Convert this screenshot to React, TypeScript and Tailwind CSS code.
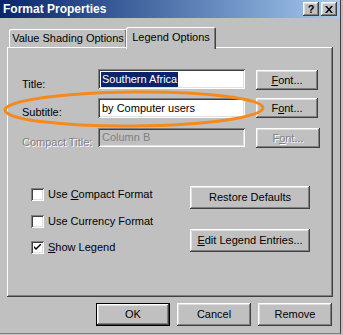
const raised =
  "bg-[#c0c0c0] shadow-[inset_-1px_-1px_0_#404040,inset_1px_1px_0_#ffffff,inset_-2px_-2px_0_#808080,inset_2px_2px_0_#dfdfdf]";
const sunken =
  "shadow-[inset_1px_1px_0_#808080,inset_-1px_-1px_0_#ffffff,inset_2px_2px_0_#404040,inset_-2px_-2px_0_#dfdfdf]";
const disabledText = "text-[#808080] [text-shadow:1px_1px_0_#ffffff]";

function Btn({ children, className = "", disabled = false }: { children: React.ReactNode; className?: string; disabled?: boolean }) {
  return (
    <div className={`${raised} flex items-center justify-center ${disabled ? disabledText : "text-black"} ${className}`}>
      {children}
    </div>
  );
}

function Field({ children, className = "", disabled = false }: { children?: React.ReactNode; className?: string; disabled?: boolean }) {
  return (
    <div className={`${sunken} ${disabled ? "bg-[#c0c0c0] text-[#808080]" : "bg-white text-black"} flex items-center px-[3px] ${className}`}>
      {children}
    </div>
  );
}

function Check({ checked, label }: { checked?: boolean; label: React.ReactNode }) {
  return (
    <div className="flex items-center h-[13px] gap-[4px]">
      <div className={`${sunken} bg-white w-[13px] h-[13px] flex items-center justify-center`}>
        {checked && (
          <svg width="7" height="7" viewBox="0 0 7 7">
            <path d="M0 2 L0 4 L2 6 L7 1 L7 -1 L2 4 Z" fill="#000" />
          </svg>
        )}
      </div>
      <span>{label}</span>
    </div>
  );
}

export default function App() {
  return (
    <div className="w-[343px] h-[335px] bg-[#c0c0c0] overflow-hidden text-[11px] leading-none font-['Liberation_Sans',Arial,sans-serif] text-black">
      <div className="relative w-[341px] h-[334px] border-r border-b border-r-[#404040] border-b-[#808080]">
        {/* title bar */}
        <div className="h-[18px] flex items-center justify-between bg-gradient-to-r from-[#0a246a] to-[#a6caf0] pl-[3px] pr-[3px]">
          <span className="text-white font-bold text-[12px]">Format Properties</span>
          <div className="flex gap-[2px]">
            <Btn className="w-[16px] h-[14px] font-bold text-[11px]">?</Btn>
            <Btn className="w-[16px] h-[14px]">
              <svg width="8" height="7" viewBox="0 0 8 7">
                <path d="M0 0 L2 0 L4 2.5 L6 0 L8 0 L5 3.5 L8 7 L6 7 L4 4.5 L2 7 L0 7 L3 3.5 Z" fill="#000" />
              </svg>
            </Btn>
          </div>
        </div>

        {/* tabs */}
        <div className="flex items-end pl-[9px] pt-[9px] h-[29px]">
          <div className="w-[118px] h-[18px] rounded-t-[2px] shadow-[inset_1px_1px_0_#ffffff,inset_-1px_0_0_#404040,inset_-2px_0_0_#808080] flex items-center justify-center pt-[1px]">
            Value Shading Options
          </div>
          <div className="relative z-10 -ml-[1px] w-[90px] h-[22px] -mb-[2px] bg-[#c0c0c0] rounded-t-[2px] shadow-[inset_1px_1px_0_#ffffff,inset_-1px_0_0_#404040,inset_-2px_0_0_#808080] flex items-start justify-center pt-[5px]">
            Legend Options
          </div>
        </div>

        {/* panel */}
        <div className="ml-[7px] w-[326px] h-[250px] shadow-[inset_-1px_-1px_0_#404040,inset_1px_1px_0_#ffffff,inset_-2px_-2px_0_#808080] pl-[15px] pt-[22px] flex flex-col">
          <div className="flex items-start h-[20px]">
            <span className="w-[76px] pt-[10px]">Title:</span>
            <Field className="w-[147px] h-[20px]">
              <span className="bg-[#0a246a] text-white px-[1px] py-[2px]">Southern Africa</span>
            </Field>
            <Btn className="ml-[11px] mt-[1px] w-[62px] h-[20px]">
              <span><span className="underline">F</span>ont...</span>
            </Btn>
          </div>
          <div className="flex items-start h-[20px] mt-[9px]">
            <span className="w-[76px] pt-[9px]">Subtitle:</span>
            <Field className="w-[147px] h-[20px]">
              <span className="pl-[1px]">by Computer users</span>
            </Field>
            <Btn className="ml-[11px] w-[62px] h-[20px]">
              <span>F<span className="underline">o</span>nt...</span>
            </Btn>
          </div>
          <div className="flex items-start h-[20px] mt-[10px]">
            <span className={`w-[76px] pt-[9px] ${disabledText}`}>Compact Title:</span>
            <Field disabled className="w-[147px] h-[19px]">
              <span className="pl-[1px]">Column B</span>
            </Field>
            <Btn disabled className="ml-[11px] w-[64px] h-[20px]">
              <span>F<span className="underline">o</span>nt...</span>
            </Btn>
          </div>

          <div className="flex mt-[38px]">
            <div className="flex flex-col pl-[9px] pt-[2px] w-[168px]">
              <Check label={<>Use <span className="underline">C</span>ompact Format</>} />
              <div className="mt-[14px]">
                <Check label="Use Currency Format" />
              </div>
              <div className="mt-[13px]">
                <Check checked label={<><span className="underline">S</span>how Legend</>} />
              </div>
            </div>
            <div className="flex flex-col gap-[20px]">
              <Btn className="w-[120px] h-[23px]">Restore Defaults</Btn>
              <Btn className="w-[120px] h-[23px]">
                <span><span className="underline">E</span>dit Legend Entries...</span>
              </Btn>
            </div>
          </div>
        </div>

        {/* bottom buttons */}
        <div className="flex justify-end gap-[7px] pr-[8px] pt-[6px]">
          <div className="border border-black">
            <Btn className="w-[72px] h-[21px]">OK</Btn>
          </div>
          <Btn className="w-[74px] h-[23px]">Cancel</Btn>
          <Btn className="w-[74px] h-[23px]">Remove</Btn>
        </div>

        {/* highlight ellipse */}
        <svg className="absolute left-0 top-[88px] pointer-events-none" width="272" height="44" viewBox="0 0 272 44">
          <ellipse cx="134" cy="21" rx="129" ry="17" fill="none" stroke="#f48a1c" strokeWidth="3" transform="rotate(-0.5 134 21)" />
        </svg>
      </div>
    </div>
  );
}
